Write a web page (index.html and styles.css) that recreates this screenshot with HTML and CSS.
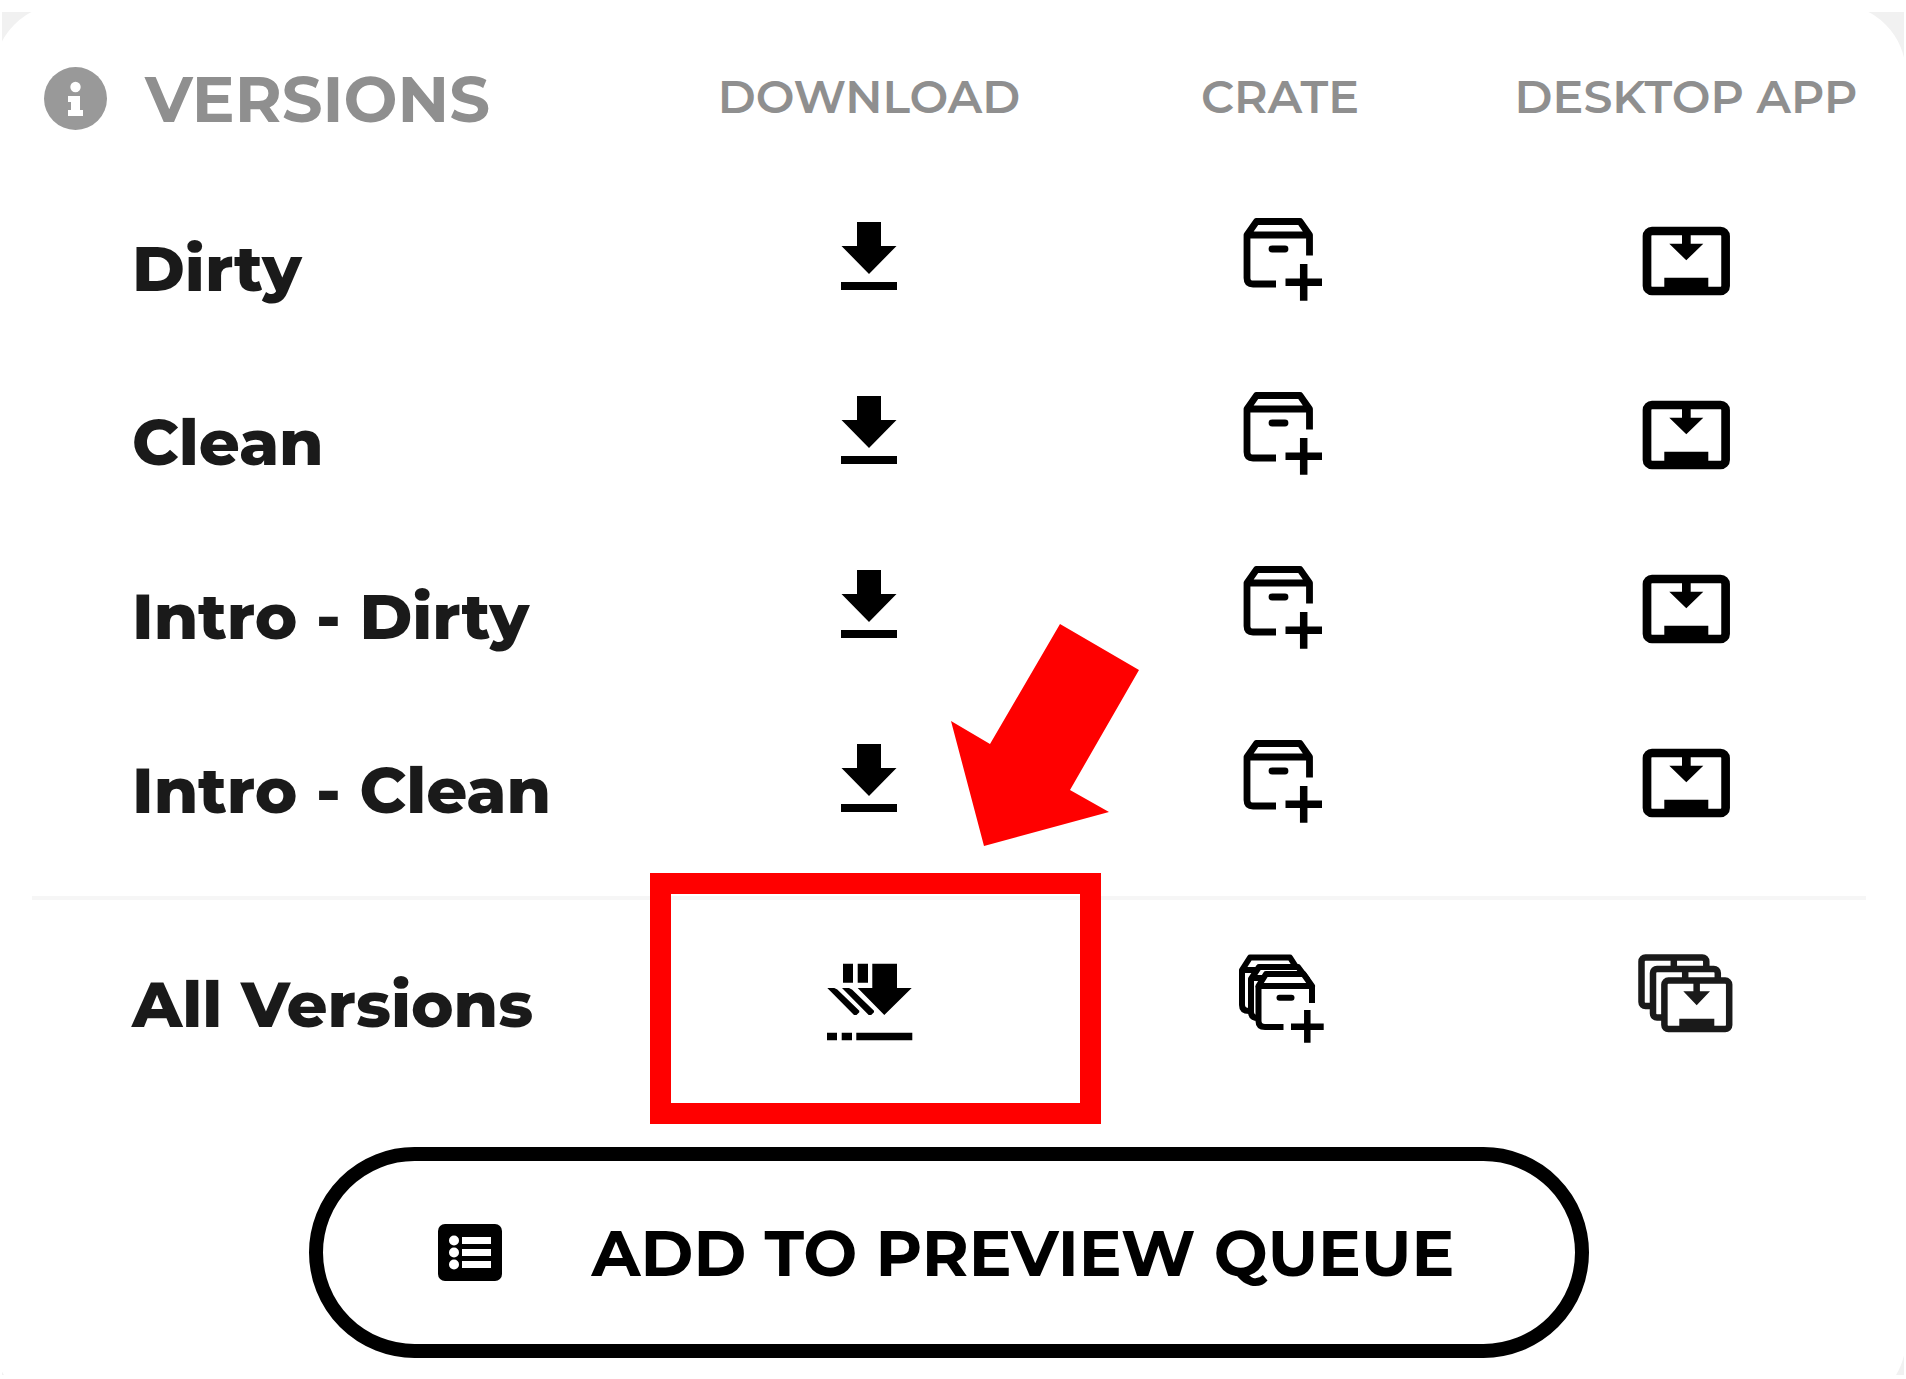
FILE: index.html
```html
<!DOCTYPE html>
<html lang="en">
<head>
    <meta charset="UTF-8">
    <meta name="viewport" content="width=device-width, initial-scale=1.0">
    <title>Versions</title>
    <link rel="stylesheet" href="styles.css">
</head>
<body>
    <!-- Icon shapes shared by the rows -->
    <svg class="sprite" aria-hidden="true">
        <symbol id="icon-download" viewBox="0 0 110 120">
            <path d="M43 13h24v24h15.500L55 65 27.500 37H43zM27 73h56v8H27z"/>
        </symbol>
        <symbol id="icon-crate" viewBox="0 0 110 120">
            <g fill="none" stroke="currentColor" stroke-width="6.800" stroke-linejoin="round">
                <path d="M51 75H28Q22 75 22 69V26L31.500 12.500H75L84.500 26V46.500M22 26H84.500"/>
                <path d="M47 40H60" stroke-linecap="round"/>
                <path d="M60.500 73.300H97M78.700 55V91.700" stroke-width="7.500"/>
            </g>
        </symbol>
        <symbol id="icon-desktop" viewBox="0 0 110 120">
            <rect x="16" y="22" width="78.600" height="60" rx="5" fill="none" stroke="currentColor" stroke-width="8.700"/>
            <path d="M51 22h8.700v12.700h12.600L55.300 51.300 38.300 34.700H51zM33.300 68.700h44V82h-44z"/>
        </symbol>
        <symbol id="icon-download-all" viewBox="0 0 110 120">
            <path d="M58.300 18.700H83V43h14.700L70.300 70 43.700 43h14.600zM29 18.700h10v19H29zM43.700 18.700H54v19H43.700z"/>
            <path d="M13.300 43h7l3 1.500 22 21.200v1.500L42.500 70H40zM28 43h7l3 1.500 22 21.200v1.500L57.200 70h-2.500z"/>
            <path d="M13 87.700h10v7.600H13zM27.700 87.700H38v7.600H27.700zM42.300 87.700h56v7.600h-56z"/>
        </symbol>
        <symbol id="icon-crate-all" viewBox="0 0 110 120">
            <g fill="#fff" stroke="currentColor" stroke-width="6" stroke-linejoin="round">
                <path d="M25 12.500H65L73 25V66H24Q17 66 17 60V25ZM17 25H73"/>
                <path d="M34 22H73L82 34V73H33Q26 73 26 67V34ZM26 33H82"/>
                <path d="M36 41H90V90H36z" stroke="none"/>
                <path d="M33.500 41L41 29H78.500L87 41z"/>
                <path d="M58.500 82H40Q33.500 82 33.500 76V41M87 41V58" fill="none"/>
                <path d="M54.500 52.700H66.500" stroke-linecap="round"/>
                <path d="M66 81.700H98.700M82.300 65V97.700" stroke-width="6.500"/>
            </g>
        </symbol>
        <symbol id="icon-desktop-all" viewBox="0 0 110 120">
            <g fill="#fff" stroke="currentColor" stroke-width="6.500">
                <rect x="10.500" y="12.500" width="64.800" height="48.500" rx="4"/>
                <path d="M42.800 13v12"/>
                <rect x="22" y="24" width="64.800" height="48.500" rx="4"/>
                <path d="M54.200 24v12"/>
                <rect x="33.400" y="35.600" width="64.800" height="48.500" rx="4"/>
            </g>
            <path d="M62.400 36h6.500v10.300H79L65.700 60.300 52.300 46.300h10.100zM48.300 73.700h35V84h-35z"/>
        </symbol>
    </svg>

    <main class="frame">
        <section class="card">
            <table class="versions">
                <thead>
                    <tr>
                        <th class="title" scope="col">
                            <div class="title-inner">
                                <svg class="info" viewBox="0 0 63 63" aria-hidden="true">
                                    <circle cx="31.500" cy="31.500" r="31.500" fill="#999"/>
                                    <circle cx="31.500" cy="20" r="5.200" fill="#fff"/>
                                    <path d="M24 29h12v14h3v6H24v-6h3v-8h-3z" fill="#fff"/>
                                </svg>
                                <span>VERSIONS</span>
                            </div>
                        </th>
                        <th class="col-download" scope="col">DOWNLOAD</th>
                        <th class="col-crate" scope="col">CRATE</th>
                        <th class="col-desktop" scope="col">DESKTOP APP</th>
                    </tr>
                </thead>
                <tbody>
                    <tr>
                        <th scope="row">Dirty</th>
                        <td><button type="button" aria-label="Download Dirty"><svg><use href="#icon-download"/></svg></button></td>
                        <td><button type="button" aria-label="Add Dirty to crate"><svg><use href="#icon-crate"/></svg></button></td>
                        <td><button type="button" aria-label="Send Dirty to desktop app"><svg><use href="#icon-desktop"/></svg></button></td>
                    </tr>
                    <tr>
                        <th scope="row">Clean</th>
                        <td><button type="button" aria-label="Download Clean"><svg><use href="#icon-download"/></svg></button></td>
                        <td><button type="button" aria-label="Add Clean to crate"><svg><use href="#icon-crate"/></svg></button></td>
                        <td><button type="button" aria-label="Send Clean to desktop app"><svg><use href="#icon-desktop"/></svg></button></td>
                    </tr>
                    <tr>
                        <th scope="row">Intro - Dirty</th>
                        <td><button type="button" aria-label="Download Intro - Dirty"><svg><use href="#icon-download"/></svg></button></td>
                        <td><button type="button" aria-label="Add Intro - Dirty to crate"><svg><use href="#icon-crate"/></svg></button></td>
                        <td><button type="button" aria-label="Send Intro - Dirty to desktop app"><svg><use href="#icon-desktop"/></svg></button></td>
                    </tr>
                    <tr class="last">
                        <th scope="row">Intro - Clean</th>
                        <td><button type="button" aria-label="Download Intro - Clean"><svg><use href="#icon-download"/></svg></button></td>
                        <td><button type="button" aria-label="Add Intro - Clean to crate"><svg><use href="#icon-crate"/></svg></button></td>
                        <td><button type="button" aria-label="Send Intro - Clean to desktop app"><svg><use href="#icon-desktop"/></svg></button></td>
                    </tr>
                </tbody>
                <tfoot>
                    <tr>
                        <th scope="row">All Versions</th>
                        <td class="highlighted">
                            <button type="button" aria-label="Download all versions"><svg><use href="#icon-download-all"/></svg></button>
                            <div class="callout">
                                <svg class="callout-arrow" viewBox="0 0 188 222" aria-hidden="true">
                                    <path d="M109 0L188 46 119 166 158 188 33 222 0 97 39 120z" fill="#f00"/>
                                </svg>
                            </div>
                        </td>
                        <td><button type="button" aria-label="Add all versions to crate"><svg><use href="#icon-crate-all"/></svg></button></td>
                        <td><button class="soft" type="button" aria-label="Send all versions to desktop app"><svg><use href="#icon-desktop-all"/></svg></button></td>
                    </tr>
                </tfoot>
            </table>

            <button class="queue" type="button">
                <svg viewBox="0 0 64 57" aria-hidden="true">
                    <rect width="64" height="57" rx="7"/>
                    <g fill="#fff">
                        <circle cx="16" cy="16.500" r="5"/>
                        <circle cx="16" cy="28.500" r="5"/>
                        <circle cx="16" cy="40.500" r="5"/>
                        <path d="M24 13h29v7H24zM24 25h29v7H24zM24 37h29v7H24z"/>
                    </g>
                </svg>
                <span>ADD TO PREVIEW QUEUE</span>
            </button>
        </section>
    </main>
</body>
</html>
```
FILE: styles.css
```css
* {
    box-sizing: border-box;
}
body {
    font-family: Montserrat, Inter, sans-serif;
    margin: 0;
    padding: 12px 2px 3px;
    background-color: #fff;
    color: #1a1a1a;
}
.sprite {
    position: absolute;
    width: 0;
    height: 0;
}
.frame {
    overflow: hidden;
    background-color: #f1f1f1;
}
/* The card runs past the frame so that only the tips of its corners show */
.card {
    margin: -8px -2px -34px -8px;
    padding: 8px 40px 51px 38px;
    border-radius: 70px;
    background-color: #fff;
}
.versions {
    width: 100%;
    table-layout: fixed;
    border-collapse: separate;
    border-spacing: 0;
}
.versions th,
.versions td {
    height: 174px;
    padding: 0;
    text-align: center;
    vertical-align: middle;
}
.versions thead th {
    height: 170px;
    font-size: 46px;
    font-weight: 600;
    line-height: 56px;
    color: #8f8f8f;
    white-space: nowrap;
}
.versions .col-download {
    width: 370px;
}
.versions .col-crate {
    width: 452px;
}
.versions .col-desktop {
    width: 360px;
}
.versions .title {
    padding-top: 3px;
    font-size: 64px;
    font-weight: 700;
    line-height: 80px;
}
.title-inner {
    display: flex;
    align-items: center;
    gap: 38px;
    padding-left: 12px;
}
.info {
    width: 63px;
    height: 63px;
}
.versions th[scope="row"] {
    padding-left: 100px;
    padding-bottom: 3px;
    font-size: 64px;
    font-weight: 800;
    line-height: 80px;
    text-align: left;
    white-space: nowrap;
}
.versions .last th[scope="row"],
.versions .last td {
    height: 196px;
    padding-bottom: 18px;
    border-bottom: 4px solid #f6f6f6;
}
.versions .last th[scope="row"] {
    padding-bottom: 21px;
}
.versions tfoot th,
.versions tfoot td {
    height: 210px;
}
button {
    border: none;
    background: none;
    color: #000;
    font-family: inherit;
    cursor: pointer;
}
td button {
    display: block;
    margin: 0 auto;
    padding: 0;
}
td button.soft {
    color: #1a1a1a;
}
td button svg {
    display: block;
    width: 110px;
    height: 120px;
    fill: currentColor;
}
.highlighted {
    position: relative;
}
.callout {
    position: absolute;
    top: -27px;
    left: -34px;
    width: 451px;
    height: 251px;
    border: 21px solid #f00;
    pointer-events: none;
}
.callout-arrow {
    position: absolute;
    right: -59px;
    bottom: 257px;
    width: 188px;
    height: 222px;
}
.queue {
    display: flex;
    align-items: center;
    justify-content: center;
    gap: 90px;
    width: 70%;
    max-width: 1280px;
    height: 211px;
    margin: 37px auto 0;
    padding: 0 6px 0 0;
    border: 14px solid #000;
    border-radius: 106px;
    font-size: 64px;
    font-weight: 700;
    line-height: 80px;
    white-space: nowrap;
}
.queue svg {
    width: 64px;
    height: 57px;
}
```
